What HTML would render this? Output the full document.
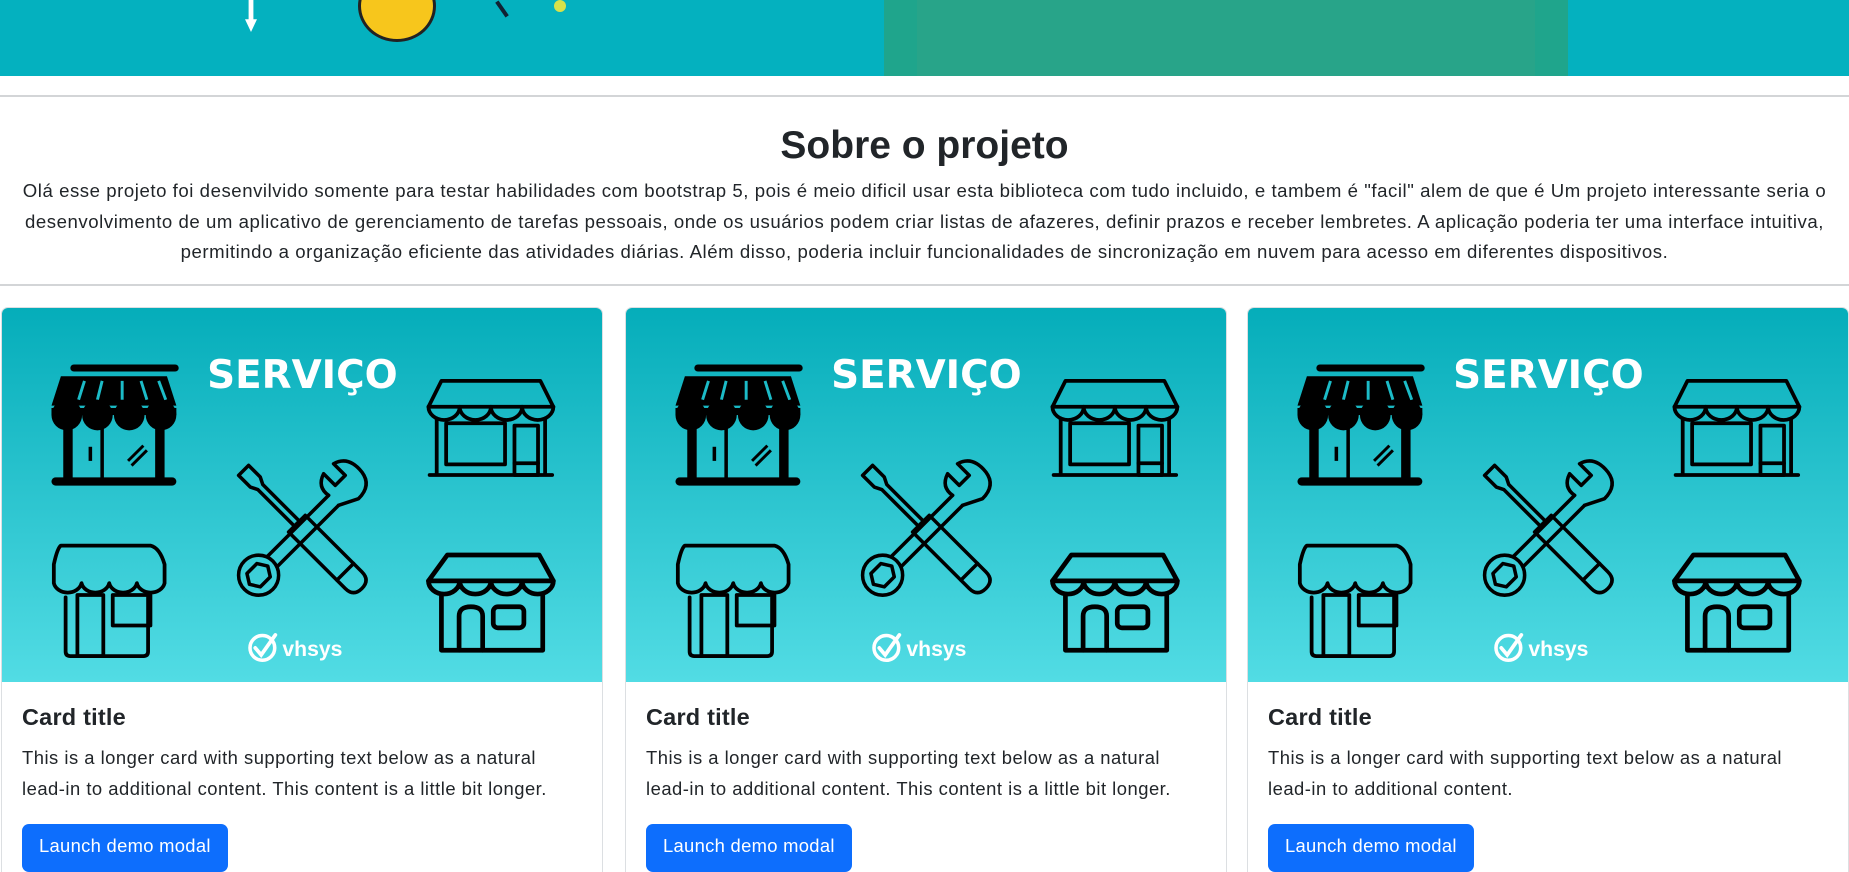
<!DOCTYPE html>
<html style="overflow:hidden;height:872px"><head><meta charset="utf-8">
<style>
*{box-sizing:border-box;margin:0;padding:0}
body{width:1849px;height:872px;overflow:hidden;background:#fff;font-family:"Liberation Sans",sans-serif;color:#212529;position:relative}
.banner{position:absolute;left:0;top:0;width:1849px;height:76px;background:#04b1bf}
hr.l{position:absolute;left:0;width:1849px;height:2px;background:#d3d5d7;border:0}
h2{position:absolute;top:124px;left:0;width:1849px;text-align:center;font-size:39px;font-weight:bold;color:#212529}
p.intro{position:absolute;top:176px;left:8px;width:1833px;text-align:center;font-size:18.6px;line-height:30.5px;letter-spacing:0.55px}
.card{position:absolute;top:307px;width:602px;height:600px;border:1px solid #dcdfe2;border-radius:7px;overflow:hidden;background:#fff}
.card svg{display:block;width:602px;height:374px}
.body{padding:20px 20px}
.body h5{font-size:23.5px;font-weight:bold;margin-bottom:12px;margin-top:2px;letter-spacing:0.2px}
.body p{font-size:18.4px;line-height:30.5px;margin-bottom:20px;letter-spacing:0.5px}
.btn{display:inline-block;background:#0d6efd;color:#fff;font-size:18.4px;padding:11px 17px;border-radius:7px;height:48px;letter-spacing:0.3px}
</style></head><body>
<div class="banner">
 <div style="position:absolute;left:884px;top:0;width:684px;height:76px;background:#1fa58c"></div>
 <div style="position:absolute;left:917px;top:0;width:618px;height:76px;background:#28a489"></div>
 <div style="position:absolute;left:245px;top:0;width:12px;height:32px;background:#fff;clip-path:polygon(30% 0,70% 0,70% 60%,100% 60%,50% 100%,0 60%,30% 60%)"></div>
 <div style="position:absolute;left:358px;top:-30px;width:78px;height:72px;border-radius:50%;background:#f7c61c;border:3px solid #222"></div>
 <div style="position:absolute;left:500px;top:0;width:4px;height:18px;background:#123;transform:rotate(-35deg)"></div>
 <div style="position:absolute;left:554px;top:0;width:12px;height:12px;border-radius:50%;background:#d7e24a"></div>
</div>
<hr class="l" style="top:95px">
<h2>Sobre o projeto</h2>
<p class="intro">Olá esse projeto foi desenvilvido somente para testar habilidades com bootstrap 5, pois é meio dificil usar esta biblioteca com tudo incluido, e tambem é "facil" alem de que é Um projeto interessante seria o desenvolvimento de um aplicativo de gerenciamento de tarefas pessoais, onde os usuários podem criar listas de afazeres, definir prazos e receber lembretes. A aplicação poderia ter uma interface intuitiva, permitindo a organização eficiente das atividades diárias. Além disso, poderia incluir funcionalidades de sincronização em nuvem para acesso em diferentes dispositivos.</p>
<hr class="l" style="top:284px">

<svg width="0" height="0" style="position:absolute">
<defs>
<linearGradient id="g" x1="0" y1="0" x2="0" y2="1"><stop offset="0" stop-color="#05adba"/><stop offset="1" stop-color="#52dce4"/></linearGradient>
<symbol id="img" viewBox="0 0 511 318">
<rect width="511" height="318" fill="url(#g)"/>
<!-- store1 filled -->
<g transform="translate(-10,0)">
<rect x="68" y="48" width="92" height="6" rx="3" fill="#000"/>
<polygon points="60,58 150,58 158,83 52,83" fill="#000"/>
<g stroke="#1cbcc8" stroke-width="2.5"><line x1="80" y1="62" x2="75" y2="78"/><line x1="95" y1="62" x2="91" y2="78"/><line x1="112" y1="62" x2="112" y2="78"/><line x1="128" y1="62" x2="133" y2="78"/><line x1="143" y1="62" x2="149" y2="78"/></g>
<rect x="52" y="85" width="106" height="6" fill="#000"/>
<g fill="#000"><circle cx="65" cy="91" r="13"/><circle cx="91" cy="91" r="13"/><circle cx="118" cy="91" r="13"/><circle cx="145" cy="91" r="13"/></g>
<rect x="62" y="100" width="8" height="48" fill="#000"/><rect x="140" y="100" width="8" height="48" fill="#000"/>
<line x1="95" y1="100" x2="95" y2="148" stroke="#000" stroke-width="3"/>
<line x1="85" y1="118" x2="85" y2="130" stroke="#000" stroke-width="3"/>
<line x1="117" y1="130" x2="130" y2="117" stroke="#000" stroke-width="2.5"/><line x1="120" y1="134" x2="133" y2="121" stroke="#000" stroke-width="2.5"/>
<rect x="52" y="144" width="106" height="7" rx="3.5" fill="#000"/>
</g>
<!-- store2 outline -->
<g fill="none" stroke="#000" stroke-width="3.2" stroke-linejoin="round" stroke-linecap="round" transform="translate(-73,0)">
<path d="M446,62 L530,62 L541,84 L435,84 Z"/>
<path d="M435,84 a13,11 0 0 0 26.5,0 a13,11 0 0 0 26.5,0 a13,11 0 0 0 26.5,0 a13,11 0 0 0 26.5,0"/>
<line x1="442" y1="94" x2="442" y2="141"/><line x1="534" y1="94" x2="534" y2="141"/>
<line x1="436" y1="142" x2="540" y2="142"/>
<rect x="450" y="98" width="50" height="35"/><rect x="508" y="100" width="20" height="42"/><line x1="508" y1="132" x2="528" y2="132"/>
</g>
<!-- tools -->
<g fill="none" stroke="#000" stroke-width="3" stroke-linejoin="round" stroke-linecap="round">
<g transform="translate(256,189) rotate(45)">
<path d="M-72,-6 L-58,-6 L-52,-3 L-8,-3 L-8,3 L-52,3 L-58,6 L-72,6 Z"/>
<path d="M-8,-10 L60,-10 Q70,-10 70,0 Q70,10 60,10 L-8,10 Z"/>
<line x1="50" y1="-10" x2="50" y2="10"/>
</g>
<g transform="translate(256,189) rotate(-45)">
<circle cx="-54" cy="0" r="17"/>
<polygon points="-60,-8 -48,-8 -43,0 -48,8 -60,8 -65,0"/>
<path d="M-38,-6 L36,-6 M-38,6 L36,6"/>
<path d="M36,-6 Q34,-18 46,-22 L46,-8 L58,-8 L58,-22 Q72,-18 70,0 Q68,14 52,14 L36,6"/>
</g>
</g>
<!-- store3 -->
<g fill="none" stroke="#000" stroke-width="3.2" stroke-linejoin="round" stroke-linecap="round" transform="translate(-8,0)">
<path d="M58,202 L134,202 Q142,204 146,218 L146,234 a12,10 0 0 1 -23.5,0 a12,10 0 0 1 -23.5,0 a12,10 0 0 1 -23.5,0 a12,10 0 0 1 -23.5,0 L52,218 Q55,204 58,202 Z"/>
<path d="M62,246 L62,292 Q62,296 66,296 L128,296 Q132,296 132,292 L132,246"/>
<rect x="72" y="244" width="22" height="52"/>
<rect x="102" y="244" width="32" height="26"/>
</g>
<!-- store4 -->
<g fill="none" stroke="#000" stroke-width="4" stroke-linejoin="round" stroke-linecap="round" transform="translate(-73,0)">
<path d="M451,210 L529,210 L541,232 L435,232 Z"/>
<path d="M435,232 a13,11 0 0 0 26.5,0 a13,11 0 0 0 26.5,0 a13,11 0 0 0 26.5,0 a13,11 0 0 0 26.5,0"/>
<path d="M446,244 L446,291 L532,291 L532,244"/>
<path d="M461,291 L461,262 Q461,254 471,254 Q481,254 481,262 L481,291"/>
<rect x="490" y="254" width="26" height="18" rx="4"/>
</g>
<!-- logo -->
<circle cx="221" cy="289" r="10.5" fill="none" stroke="#fff" stroke-width="3"/>
<path d="M215,289 L220,295 L232,278" fill="none" stroke="#fff" stroke-width="3.2" stroke-linecap="round"/>
<text x="238" y="296" font-family="Liberation Sans,sans-serif" font-weight="bold" font-size="18" fill="#fff">vhsys</text>
<text x="255" y="68" text-anchor="middle" font-family="DejaVu Sans,sans-serif" font-weight="bold" font-size="33" fill="#fff">SERVIÇO</text>
</symbol>
</defs></svg>

<div class="card" style="left:1px"><svg viewBox="0 0 511 318" preserveAspectRatio="none"><use href="#img"/></svg>
<div class="body"><h5>Card title</h5><p>This is a longer card with supporting text below as a natural lead-in to additional content. This content is a little bit longer.</p><span class="btn">Launch demo modal</span></div></div>
<div class="card" style="left:625px"><svg viewBox="0 0 511 318" preserveAspectRatio="none"><use href="#img"/></svg>
<div class="body"><h5>Card title</h5><p>This is a longer card with supporting text below as a natural lead-in to additional content. This content is a little bit longer.</p><span class="btn">Launch demo modal</span></div></div>
<div class="card" style="left:1247px"><svg viewBox="0 0 511 318" preserveAspectRatio="none"><use href="#img"/></svg>
<div class="body"><h5>Card title</h5><p>This is a longer card with supporting text below as a natural lead-in to additional content.</p><span class="btn">Launch demo modal</span></div></div>
</body></html>
